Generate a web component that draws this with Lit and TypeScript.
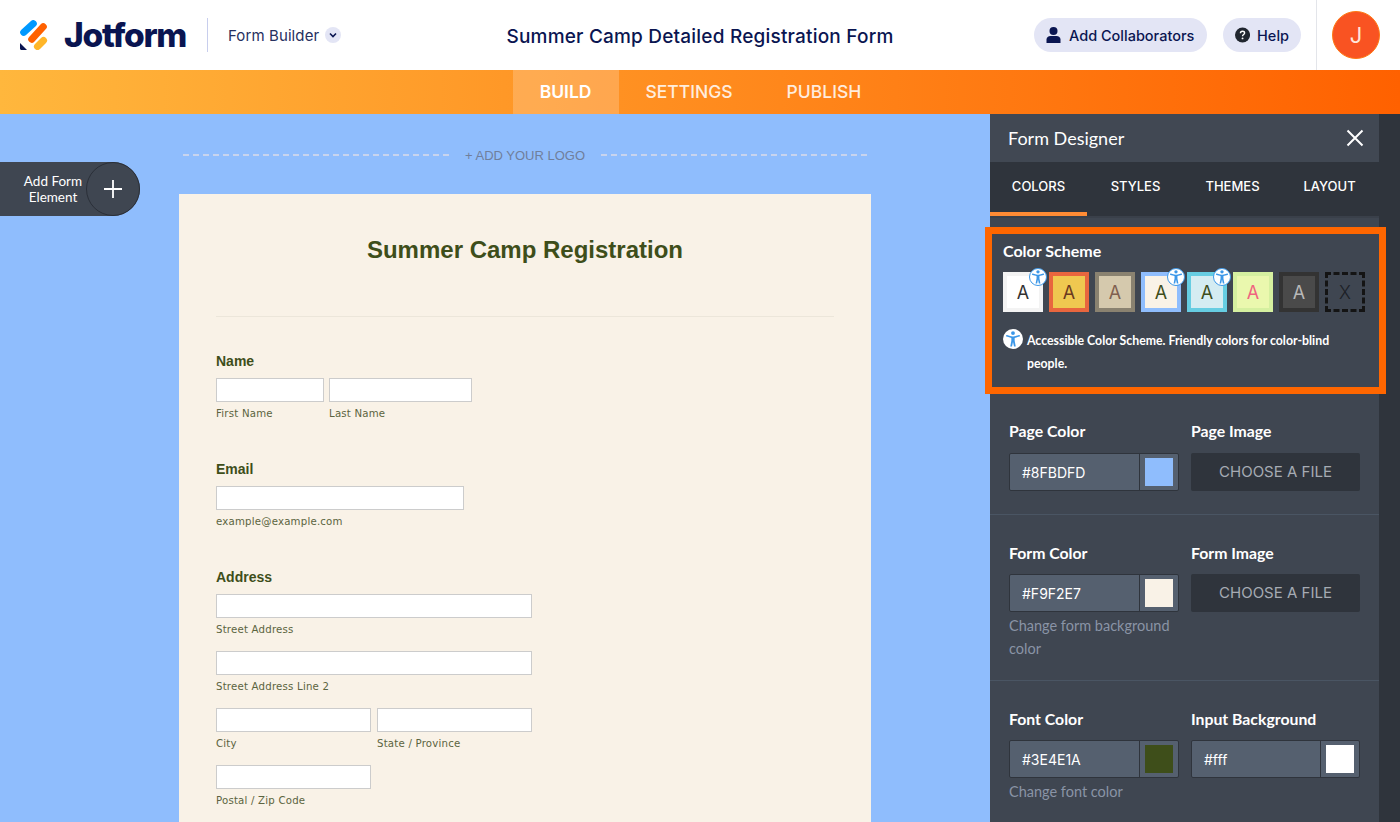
import { LitElement, html, css, svg } from "lit";
import { customElement } from "lit/decorators.js";

const swatches = [
  { border: "#f3f3f3", bg: "#ffffff", color: "#333333", a11y: true },
  { border: "#e8663e", bg: "#efc850", color: "#6b3a20", a11y: false },
  { border: "#8a8270", bg: "#d5c9ad", color: "#80604f", a11y: false },
  { border: "#8fbdfd", bg: "#f9f2e7", color: "#3e4e1a", a11y: true },
  { border: "#66cde2", bg: "#d4ecf2", color: "#3e4e1a", a11y: true },
  { border: "#d5f0a0", bg: "#eaf8ae", color: "#f0657f", a11y: false },
  { border: "#333333", bg: "#4a4a4a", color: "#b8b8b8", a11y: false },
];

// little person used by the accessible colour scheme badges
const a11yFigure = svg`
  <circle cx="12" cy="4.9" r="2.3" fill="#3b97e8"></circle>
  <path d="M4.6 8.2 L10.4 9.8 M19.4 8.2 L13.6 9.8" fill="none" stroke="#3b97e8" stroke-width="1.9" stroke-linecap="round"></path>
  <path d="M10 9 H14 V14 L15.3 21 H13.2 L12 15.6 L10.8 21 H8.7 L10 14 Z" fill="#3b97e8"></path>`;

@customElement("app-root")
export class AppRoot extends LitElement {
  static styles = css`
    :host {
      display: block;
      height: 822px;
      overflow: hidden;
      font-family: "Lato", sans-serif;
      background: #8fbdfd;
      position: relative;
    }
    * {
      box-sizing: border-box;
    }

    /* top header */
    .header {
      height: 70px;
      background: #fff;
      display: flex;
      align-items: center;
      color: #0a1551;
      position: relative;
    }
    .logo {
      display: flex;
      align-items: center;
      margin-left: 20px;
      width: 187px;
    }
    .logo svg {
      width: 28px;
      height: 30px;
      flex: none;
    }
    .logo span {
      font-family: "Inter", sans-serif;
      font-weight: 800;
      font-size: 33.5px;
      letter-spacing: -1.3px;
      margin-left: 16px;
    }
    .sep {
      width: 1px;
      height: 34px;
      background: #c8ceed;
    }
    .product {
      margin-left: 20px;
      font-family: "Inter", sans-serif;
      font-size: 15px;
      letter-spacing: 0.1px;
      display: flex;
      align-items: center;
      gap: 6px;
      color: #26305f;
    }
    .chev {
      width: 16px;
      height: 16px;
      border-radius: 50%;
      background: #e3e5f5;
      display: flex;
      align-items: center;
      justify-content: center;
    }
    .doc-title {
      position: absolute;
      left: 0;
      right: 0;
      top: 25px;
      text-align: center;
      font-family: "Inter", sans-serif;
      font-weight: 500;
      font-size: 19px;
      letter-spacing: 0.2px;
      line-height: 24px;
    }
    .actions {
      margin-left: auto;
      display: flex;
      align-items: center;
      height: 100%;
    }
    .pill {
      height: 34px;
      border-radius: 17px;
      background: #e3e5f5;
      display: flex;
      align-items: center;
      font-family: "Inter", sans-serif;
      font-weight: 500;
      font-size: 14.5px;
      padding: 0 12px;
      gap: 8px;
      margin-right: 16px;
    }
    .pill.collab {
      width: 173px;
    }
    .pill.help {
      width: 78px;
      gap: 7px;
      margin-right: 15px;
    }
    .user {
      height: 100%;
      width: 84px;
      border-left: 1px solid #e3e5ea;
      display: flex;
      align-items: center;
      padding-left: 15px;
    }
    .avatar {
      width: 48px;
      height: 48px;
      border-radius: 50%;
      background: #f95322;
      border: 1px solid #ff7a14;
      color: #ffe6dc;
      font-family: "Inter", sans-serif;
      font-size: 22px;
      display: flex;
      align-items: center;
      justify-content: center;
    }

    /* orange nav */
    .nav {
      height: 44px;
      background: linear-gradient(90deg, #ffb73d 0%, #ff6100 100%);
      display: flex;
      justify-content: center;
      padding-left: 1px;
    }
    .nav a {
      padding: 0 27px 2px;
      display: flex;
      align-items: center;
      color: #fff;
      font-family: "Inter", sans-serif;
      font-weight: 500;
      font-size: 17.5px;
      opacity: 0.85;
    }
    .nav a.active {
      background: rgba(255, 255, 255, 0.2);
      opacity: 1;
      font-weight: 600;
    }

    .main {
      display: flex;
      height: 708px;
      overflow: hidden;
    }
    .canvas {
      width: 990px;
      flex: none;
      padding: 28px 0 0 179px;
      position: relative;
    }
    .add-el {
      position: absolute;
      left: 0;
      top: 48px;
      width: 140px;
      height: 54px;
      background: #3f4651;
      border-radius: 0 27px 27px 0;
      color: #fff;
      font-size: 13.5px;
      line-height: 16px;
      text-align: center;
      display: flex;
      align-items: center;
    }
    .add-el .txt {
      width: 86px;
      padding-left: 21px;
      padding-right: 1px;
      margin-top: -1px;
    }
    .add-el .circle {
      width: 54px;
      height: 54px;
      border-radius: 50%;
      border: 1px solid #2a2f38;
      display: flex;
      align-items: center;
      justify-content: center;
    }
    .logo-row {
      width: 692px;
      height: 26px;
      display: flex;
      align-items: center;
      padding: 0 4px;
      gap: 16px;
      color: #6f7f9c;
      font-family: "Liberation Sans", sans-serif;
      font-size: 13px;
      margin-bottom: 26px;
    }
    .logo-row i {
      flex: 1;
      border-top: 2px dashed #c8d4ee;
    }

    /* the form itself */
    .form {
      width: 692px;
      height: 700px;
      background: #f9f2e7;
      padding: 0 37px;
      color: #3e4e1a;
      font-family: "Liberation Sans", sans-serif;
    }
    .form h1 {
      margin: 0;
      height: 123px;
      padding-top: 41px;
      text-align: center;
      font-size: 24px;
      line-height: 30px;
      font-weight: 700;
      border-bottom: 1px solid #ece6da;
    }
    .q {
      margin-bottom: 41px;
    }
    .q:first-of-type {
      padding-top: 36px;
    }
    .q label {
      display: block;
      font-size: 14px;
      font-weight: 700;
      line-height: 16px;
      margin-bottom: 9px;
    }
    .row {
      display: flex;
      gap: 5px;
    }
    .row.wide {
      gap: 6px;
    }
    .row + .row {
      margin-top: 15px;
    }
    .input {
      height: 24px;
      background: #fff;
      border: 1px solid #ccc;
    }
    .sub {
      font-family: "DejaVu Sans", sans-serif;
      font-size: 10.2px;
      line-height: 12px;
      margin-top: 6px;
      color: #5b6440;
      letter-spacing: 0.2px;
    }

    /* form designer panel */
    .panel {
      width: 410px;
      flex: none;
      display: flex;
      background: #2f343c;
    }
    .panel-col {
      width: 389px;
      background: #3f4651;
      color: #fff;
    }
    .panel-head {
      height: 48px;
      display: flex;
      align-items: center;
      justify-content: space-between;
      padding: 0 15px 0 18px;
      font-size: 18px;
      background: #414853;
    }
    .tabs {
      height: 56px;
      background: #2f343c;
      display: flex;
      border-bottom: 2px solid #3a404a;
    }
    .tabs a {
      width: 97px;
      height: 54px;
      padding-bottom: 6px;
      display: flex;
      align-items: center;
      justify-content: center;
      font-family: "Inter", sans-serif;
      font-size: 13px;
      font-weight: 500;
    }
    .tabs a.active {
      box-shadow: inset 0 -4px 0 #ff8b34;
    }
    .scheme {
      height: 176px;
      padding: 23px 13px 0;
    }
    .scheme h3 {
      margin: 0;
      font-size: 16px;
      line-height: 20px;
      font-weight: 700;
    }
    .swatches {
      display: flex;
      gap: 6px;
      margin-top: 11px;
    }
    .swatch {
      width: 40px;
      height: 40px;
      border: 4px solid;
      position: relative;
      display: flex;
      align-items: center;
      justify-content: center;
      font-family: "Inter", sans-serif;
      font-size: 18px;
    }
    .swatch.none {
      border: 3px dashed #141414;
      background: transparent;
      color: #1c2026;
      font-weight: 300;
    }
    .badge {
      position: absolute;
      top: -8px;
      right: -8px;
      width: 18px;
      height: 18px;
      border-radius: 50%;
      background: #fff;
      border: 1px solid #3b97e8;
    }
    .badge svg,
    .note-icon svg {
      display: block;
      width: 100%;
      height: 100%;
    }
    .note {
      display: flex;
      gap: 4px;
      margin-top: 17px;
      font-size: 12.3px;
      line-height: 23px;
      font-weight: 700;
    }
    .note-icon {
      width: 20px;
      height: 20px;
      border-radius: 50%;
      background: #fff;
      flex: none;
    }
    .note p {
      margin: 0;
      width: 330px;
    }
    .section {
      padding: 28px 19px 0;
      display: grid;
      grid-template-columns: 170px 169px;
      column-gap: 12px;
      align-content: start;
      border-bottom: 1px solid #4a5563;
    }
    .section.page {
      height: 121px;
      padding-top: 27px;
    }
    .section.formc {
      height: 166px;
      padding-top: 28px;
    }
    .section.fontc {
      padding-top: 28px;
      border-bottom: 0;
    }
    .section h4 {
      margin: 0 0 11px;
      font-size: 15.8px;
      line-height: 20px;
      font-weight: 700;
    }
    .section.page h4 {
      margin-bottom: 12px;
    }
    .color-input {
      height: 38px;
      background: #55606f;
      border: 1px solid #2f343c;
      border-radius: 2px;
      display: flex;
      align-items: center;
      justify-content: space-between;
      font-family: "Inter", sans-serif;
      font-size: 14px;
      padding-left: 12px;
    }
    .color-input b {
      font-weight: 400;
    }
    .color-input span {
      width: 39px;
      height: 36px;
      border-left: 1px solid #2f343c;
      display: flex;
      align-items: center;
      justify-content: center;
    }
    .color-input i {
      width: 28px;
      height: 28px;
    }
    .file {
      height: 38px;
      padding-bottom: 2px;
      background: #2f343c;
      border-radius: 2px;
      color: #a6abb3;
      font-family: "Inter", sans-serif;
      font-size: 15px;
      display: flex;
      align-items: center;
      justify-content: center;
    }
    .hint {
      margin: 2px 0 0;
      color: #8a94a6;
      font-size: 14.5px;
      line-height: 23px;
    }
    .scroll {
      flex: 1;
    }

    /* highlight drawn over the colour scheme block */
    .highlight {
      position: absolute;
      left: 985px;
      top: 227px;
      width: 401px;
      height: 167px;
      border: 7px solid #ff6600;
      pointer-events: none;
    }
  `;

  private field(label: string, rows: unknown) {
    return html`<div class="q"><label>${label}</label>${rows}</div>`;
  }

  private sub(text: string, width: number) {
    return html`<div style="width:${width}px">
      <div class="input"></div>
      <div class="sub">${text}</div>
    </div>`;
  }

  private colorField(label: string, value: string, color: string, hint = "") {
    return html`<div>
      <h4>${label}</h4>
      <div class="color-input">
        <b>${value}</b>
        <span><i style="background:${color}"></i></span>
      </div>
      ${hint ? html`<p class="hint">${hint}</p>` : ""}
    </div>`;
  }

  render() {
    return html`
      <div class="header">
        <div class="logo">
          <svg viewBox="0 0 28 30">
            <g fill="none" stroke-linecap="round" stroke-width="7">
              <path d="M3.7 12.3 L13.3 3.7" stroke="#0099ff"></path>
              <path d="M11.7 19.3 L23.3 6.7" stroke="#ff6100"></path>
              <path d="M17.5 26.5 L23.5 20.5" stroke="#ffb629"></path>
            </g>
            <path d="M0 23 L7 30 H1.5 C0.6 30 0 29.4 0 28.5 Z" fill="#0a1551"></path>
          </svg>
          <span>Jotform</span>
        </div>
        <div class="sep"></div>
        <div class="product">
          Form Builder
          <span class="chev">
            <svg width="10" height="10" viewBox="0 0 10 10">
              <path d="M2 3.5 L5 6.5 L8 3.5" fill="none" stroke="#0a1551" stroke-width="1.6"></path>
            </svg>
          </span>
        </div>
        <div class="doc-title">Summer Camp Detailed Registration Form</div>
        <div class="actions">
          <div class="pill collab">
            <svg width="15" height="16" viewBox="0 0 15 16">
              <circle cx="7.5" cy="4" r="4" fill="#0a1551"></circle>
              <path d="M0.5 16 V12.5 C0.5 10.3 2.3 9 4.5 9 H10.5 C12.7 9 14.5 10.3 14.5 12.5 V16 Z" fill="#0a1551"></path>
            </svg>
            Add Collaborators
          </div>
          <div class="pill help">
            <svg width="16" height="16" viewBox="0 0 16 16">
              <circle cx="8" cy="8" r="8" fill="#20262f"></circle>
              <path d="M5.8 6.2 C5.8 4.9 6.8 4.1 8 4.1 C9.3 4.1 10.2 4.9 10.2 6 C10.2 7.5 8 7.6 8 9.3" fill="none" stroke="#fff" stroke-width="1.5"></path>
              <circle cx="8" cy="11.6" r="1" fill="#fff"></circle>
            </svg>
            Help
          </div>
          <div class="user"><div class="avatar">J</div></div>
        </div>
      </div>

      <div class="nav">
        <a class="active">BUILD</a>
        <a>SETTINGS</a>
        <a>PUBLISH</a>
      </div>

      <div class="main">
        <div class="canvas">
          <div class="add-el">
            <div class="txt">Add Form Element</div>
            <div class="circle">
              <svg width="18" height="18" viewBox="0 0 18 18">
                <path d="M9 0 V18 M0 9 H18" stroke="#fff" stroke-width="1.8"></path>
              </svg>
            </div>
          </div>
          <div class="logo-row"><i></i>+ ADD YOUR LOGO<i></i></div>
          <div class="form">
            <h1>Summer Camp Registration</h1>
            ${this.field(
              "Name",
              html`<div class="row">${this.sub("First Name", 108)}${this.sub("Last Name", 143)}</div>`
            )}
            ${this.field(
              "Email",
              html`<div class="row">${this.sub("example@example.com", 248)}</div>`
            )}
            ${this.field(
              "Address",
              html`
                <div class="row">${this.sub("Street Address", 316)}</div>
                <div class="row">${this.sub("Street Address Line 2", 316)}</div>
                <div class="row wide">${this.sub("City", 155)}${this.sub("State / Province", 155)}</div>
                <div class="row">${this.sub("Postal / Zip Code", 155)}</div>
              `
            )}
          </div>
        </div>

        <div class="panel">
          <div class="panel-col">
            <div class="panel-head">
              Form Designer
              <svg width="18" height="18" viewBox="0 0 18 18">
                <path d="M1.5 1.5 L16.5 16.5 M16.5 1.5 L1.5 16.5" stroke="#fff" stroke-width="2"></path>
              </svg>
            </div>
            <div class="tabs">
              <a class="active">COLORS</a><a>STYLES</a><a>THEMES</a><a>LAYOUT</a>
            </div>
            <div class="scheme">
              <h3>Color Scheme</h3>
              <div class="swatches">
                ${swatches.map(
                  (s) => html`<div
                    class="swatch"
                    style="border-color:${s.border};background:${s.bg};color:${s.color}"
                  >
                    A
                    ${s.a11y
                      ? html`<div class="badge"><svg viewBox="2 1 20 22">${a11yFigure}</svg></div>`
                      : ""}
                  </div>`
                )}
                <div class="swatch none">X</div>
              </div>
              <div class="note">
                <div class="note-icon"><svg viewBox="0 0 24 24">${a11yFigure}</svg></div>
                <p>Accessible Color Scheme. Friendly colors for color-blind people.</p>
              </div>
            </div>
            <div class="section page">
              ${this.colorField("Page Color", "#8FBDFD", "#8fbdfd")}
              <div><h4>Page Image</h4><div class="file">CHOOSE A FILE</div></div>
            </div>
            <div class="section formc">
              ${this.colorField("Form Color", "#F9F2E7", "#f9f2e7", "Change form background color")}
              <div><h4>Form Image</h4><div class="file">CHOOSE A FILE</div></div>
            </div>
            <div class="section fontc">
              ${this.colorField("Font Color", "#3E4E1A", "#3e4e1a", "Change font color")}
              ${this.colorField("Input Background", "#fff", "#ffffff")}
            </div>
          </div>
          <div class="scroll"></div>
        </div>
      </div>
      <div class="highlight"></div>
    `;
  }
}
